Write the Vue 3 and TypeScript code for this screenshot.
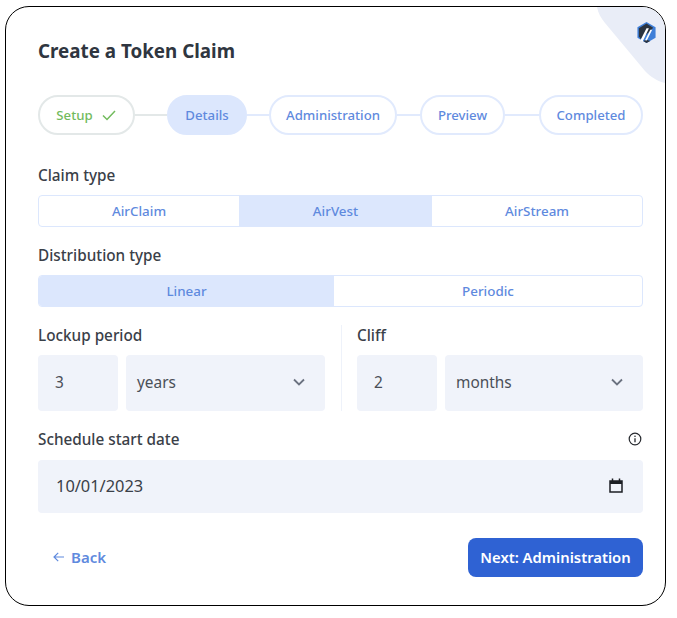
<script setup lang="ts">
type Step = { label: string; state: 'done' | 'active' | 'todo' }

const steps: Step[] = [
  { label: 'Setup', state: 'done' },
  { label: 'Details', state: 'active' },
  { label: 'Administration', state: 'todo' },
  { label: 'Preview', state: 'todo' },
  { label: 'Completed', state: 'todo' },
]

const claimTypes = [
  { label: 'AirClaim', active: false },
  { label: 'AirVest', active: true },
  { label: 'AirStream', active: false },
]

const distributionTypes = [
  { label: 'Linear', active: true },
  { label: 'Periodic', active: false },
]

const durations = [
  { label: 'Lockup period', amount: '3', unit: 'years' },
  { label: 'Cliff', amount: '2', unit: 'months' },
]
</script>

<template>
  <div class="card">
    <svg class="corner" width="70" height="76" viewBox="0 0 70 76" aria-hidden="true">
      <path d="M2 0H70V76C62 74 56 70 50 64L10 16C6 11 3 6 2 0Z" fill="#e9edf7" />
    </svg>
    <svg class="logo" width="21" height="23" viewBox="0 0 22 24" aria-hidden="true">
      <path d="M11 1L20.5 6.5V17.5L11 23L1.5 17.5V6.5Z" fill="#3f7fd8" />
      <path d="M11 2.5L18 7L15 10.5L5 19L3 16V7.5Z" fill="#2b3440" />
      <path d="M11 19.5L15 21L11 23L7.5 21Z" fill="#2b3440" />
      <path d="M4.5 20.5L11 7.5H13.5L7 21.5Z" fill="#fff" />
      <path d="M9.5 20L15 9H17L11.3 20.5Z" fill="#fff" />
    </svg>

    <h1 class="title">Create a Token Claim</h1>

    <div class="stepper">
      <template v-for="(step, i) in steps" :key="step.label">
        <span v-if="i > 0" class="link" :class="{ grey: i === 1 }"></span>
        <div class="step" :class="step.state">
          {{ step.label }}
          <svg v-if="step.state === 'done'" class="check" width="16" height="12" viewBox="0 0 16 12" fill="none">
            <path d="M2 6.5L6 10.5L14 2" stroke="currentColor" stroke-width="1.5" />
          </svg>
        </div>
      </template>
    </div>

    <p class="label claim-label">Claim type</p>
    <div class="segments claim">
      <div v-for="o in claimTypes" :key="o.label" class="segment" :class="{ on: o.active }">{{ o.label }}</div>
    </div>

    <p class="label dist-label">Distribution type</p>
    <div class="segments dist">
      <div v-for="o in distributionTypes" :key="o.label" class="segment" :class="{ on: o.active }">{{ o.label }}</div>
    </div>

    <div class="durations">
      <div v-for="d in durations" :key="d.label" class="duration">
        <p class="label">{{ d.label }}</p>
        <div class="fields">
          <div class="field amount">{{ d.amount }}</div>
          <div class="field unit">
            {{ d.unit }}
            <svg width="12" height="8" viewBox="0 0 12 8" fill="none">
              <path d="M1 1.5L6 6.5L11 1.5" stroke="#6b7280" stroke-width="1.8" />
            </svg>
          </div>
        </div>
      </div>
    </div>

    <div class="date-head">
      <p class="label">Schedule start date</p>
      <svg width="14" height="14" viewBox="0 0 14 14" fill="none">
        <circle cx="7" cy="7" r="5.8" stroke="#26292e" stroke-width="1.2" />
        <path d="M7 6.2V10.2" stroke="#26292e" stroke-width="1.3" />
        <circle cx="7" cy="4.2" r="0.8" fill="#26292e" />
      </svg>
    </div>
    <div class="field date">
      10/01/2023
      <svg width="14" height="15" viewBox="0 0 14 15" fill="none">
        <path d="M1 3H13V14H1Z" stroke="#1c1f24" stroke-width="1.5" />
        <path d="M1 3H13V6H1Z" fill="#1c1f24" />
        <path d="M3.5 0.5V3M10.5 0.5V3" stroke="#1c1f24" stroke-width="1.5" />
      </svg>
    </div>

    <div class="actions">
      <button class="back" type="button">
        <svg width="11" height="10" viewBox="0 0 11 10" fill="none">
          <path d="M5.2 0.8L1 5L5.2 9.2M1 5H11" stroke="currentColor" stroke-width="1.2" />
        </svg>
        Back
      </button>
      <button class="next" type="button">Next: Administration</button>
    </div>
  </div>
</template>

<style>
body {
  background: #fff;
}
</style>

<style scoped>
.card {
  position: relative;
  box-sizing: border-box;
  width: 661px;
  height: 600px;
  margin: 6px 0 0 5px;
  padding: 0 22px 0 32px;
  border: 1px solid #000;
  border-radius: 24px;
  overflow: hidden;
  background: #fff;
  font-family: "Noto Sans", sans-serif;
  color: #3a4048;
}

.corner {
  position: absolute;
  top: 0;
  right: 0;
}

.logo {
  position: absolute;
  top: 14px;
  right: 8px;
  filter: blur(0.4px);
}

.title {
  margin: 0;
  padding-top: 31px;
  font-size: 18.8px;
  line-height: 26px;
  font-weight: 700;
  color: #2f3640;
}

.stepper {
  display: grid;
  grid-template-columns: 97px 32px 80px 22px 128px 23px 85px 34px 104px;
  align-items: center;
  height: 40px;
  margin-top: 31px;
}

.step {
  box-sizing: border-box;
  display: flex;
  align-items: center;
  justify-content: center;
  gap: 8px;
  height: 40px;
  padding-bottom: 1px;
  border: 2px solid #e1eafd;
  border-radius: 20px;
  font-size: 13.2px;
  font-weight: 500;
  color: #5f8ade;
  white-space: nowrap;
}

.step.done {
  border-color: #e3e8e8;
  color: #72bb5d;
}

.step.active {
  border-color: #dce7fd;
  background: #dce7fd;
}

.check {
  flex: none;
}

.link {
  height: 2px;
  background: #e1eafd;
}

.link.grey {
  background: #e3e8e8;
}

.label {
  margin: 0;
  font-size: 15.3px;
  line-height: 20px;
  font-weight: 500;
  color: #3a4048;
}

.claim-label {
  margin-top: 30px;
}

.dist-label {
  margin-top: 18px;
}

.segments {
  display: grid;
  height: 32px;
  margin-top: 10px;
  box-sizing: border-box;
  border: 1px solid #dce7fd;
  border-radius: 4px;
  overflow: hidden;
}

.claim {
  grid-template-columns: 200px 193px 1fr;
}

.dist {
  grid-template-columns: 295px 1fr;
}

.segment {
  display: flex;
  align-items: center;
  justify-content: center;
  padding-bottom: 1px;
  font-size: 13.4px;
  font-weight: 500;
  color: #5f8ade;
}

.segment.on {
  background: #dce7fd;
}

.durations {
  display: grid;
  grid-template-columns: 304px 1fr;
  margin-top: 18px;
}

.duration:first-child {
  border-right: 1px solid #eef2fa;
  padding-right: 16px;
}

.duration:last-child {
  padding-left: 15px;
}

.fields {
  display: grid;
  grid-template-columns: 80px 1fr;
  gap: 8px;
  margin-top: 10px;
}

.field {
  box-sizing: border-box;
  display: flex;
  align-items: center;
  height: 56px;
  padding-bottom: 2px;
  border-radius: 4px;
  background: #f0f3fa;
  font-size: 15.4px;
  color: #4a4f57;
}

.amount {
  padding-left: 17px;
}

.unit {
  justify-content: space-between;
  padding: 0 20px 2px 11px;
}

.date-head {
  display: flex;
  align-items: center;
  justify-content: space-between;
  margin-top: 18px;
  padding-right: 1px;
}

.date {
  justify-content: space-between;
  height: 53px;
  margin-top: 11px;
  padding: 0 20px 3px 18px;
  font-size: 16.4px;
  color: #3a4048;
}

.actions {
  display: flex;
  align-items: center;
  justify-content: space-between;
  margin-top: 25px;
}

.back {
  display: flex;
  align-items: center;
  gap: 7px;
  margin-left: 15px;
  padding: 0 0 2px;
  border: 0;
  background: none;
  font: inherit;
  font-size: 15px;
  font-weight: 600;
  color: #5f8ade;
}

.next {
  width: 175px;
  height: 39px;
  padding: 0 0 2px;
  border: 0;
  border-radius: 8px;
  background: #2f62d3;
  font: inherit;
  font-size: 14.8px;
  font-weight: 600;
  color: #fff;
}
</style>
